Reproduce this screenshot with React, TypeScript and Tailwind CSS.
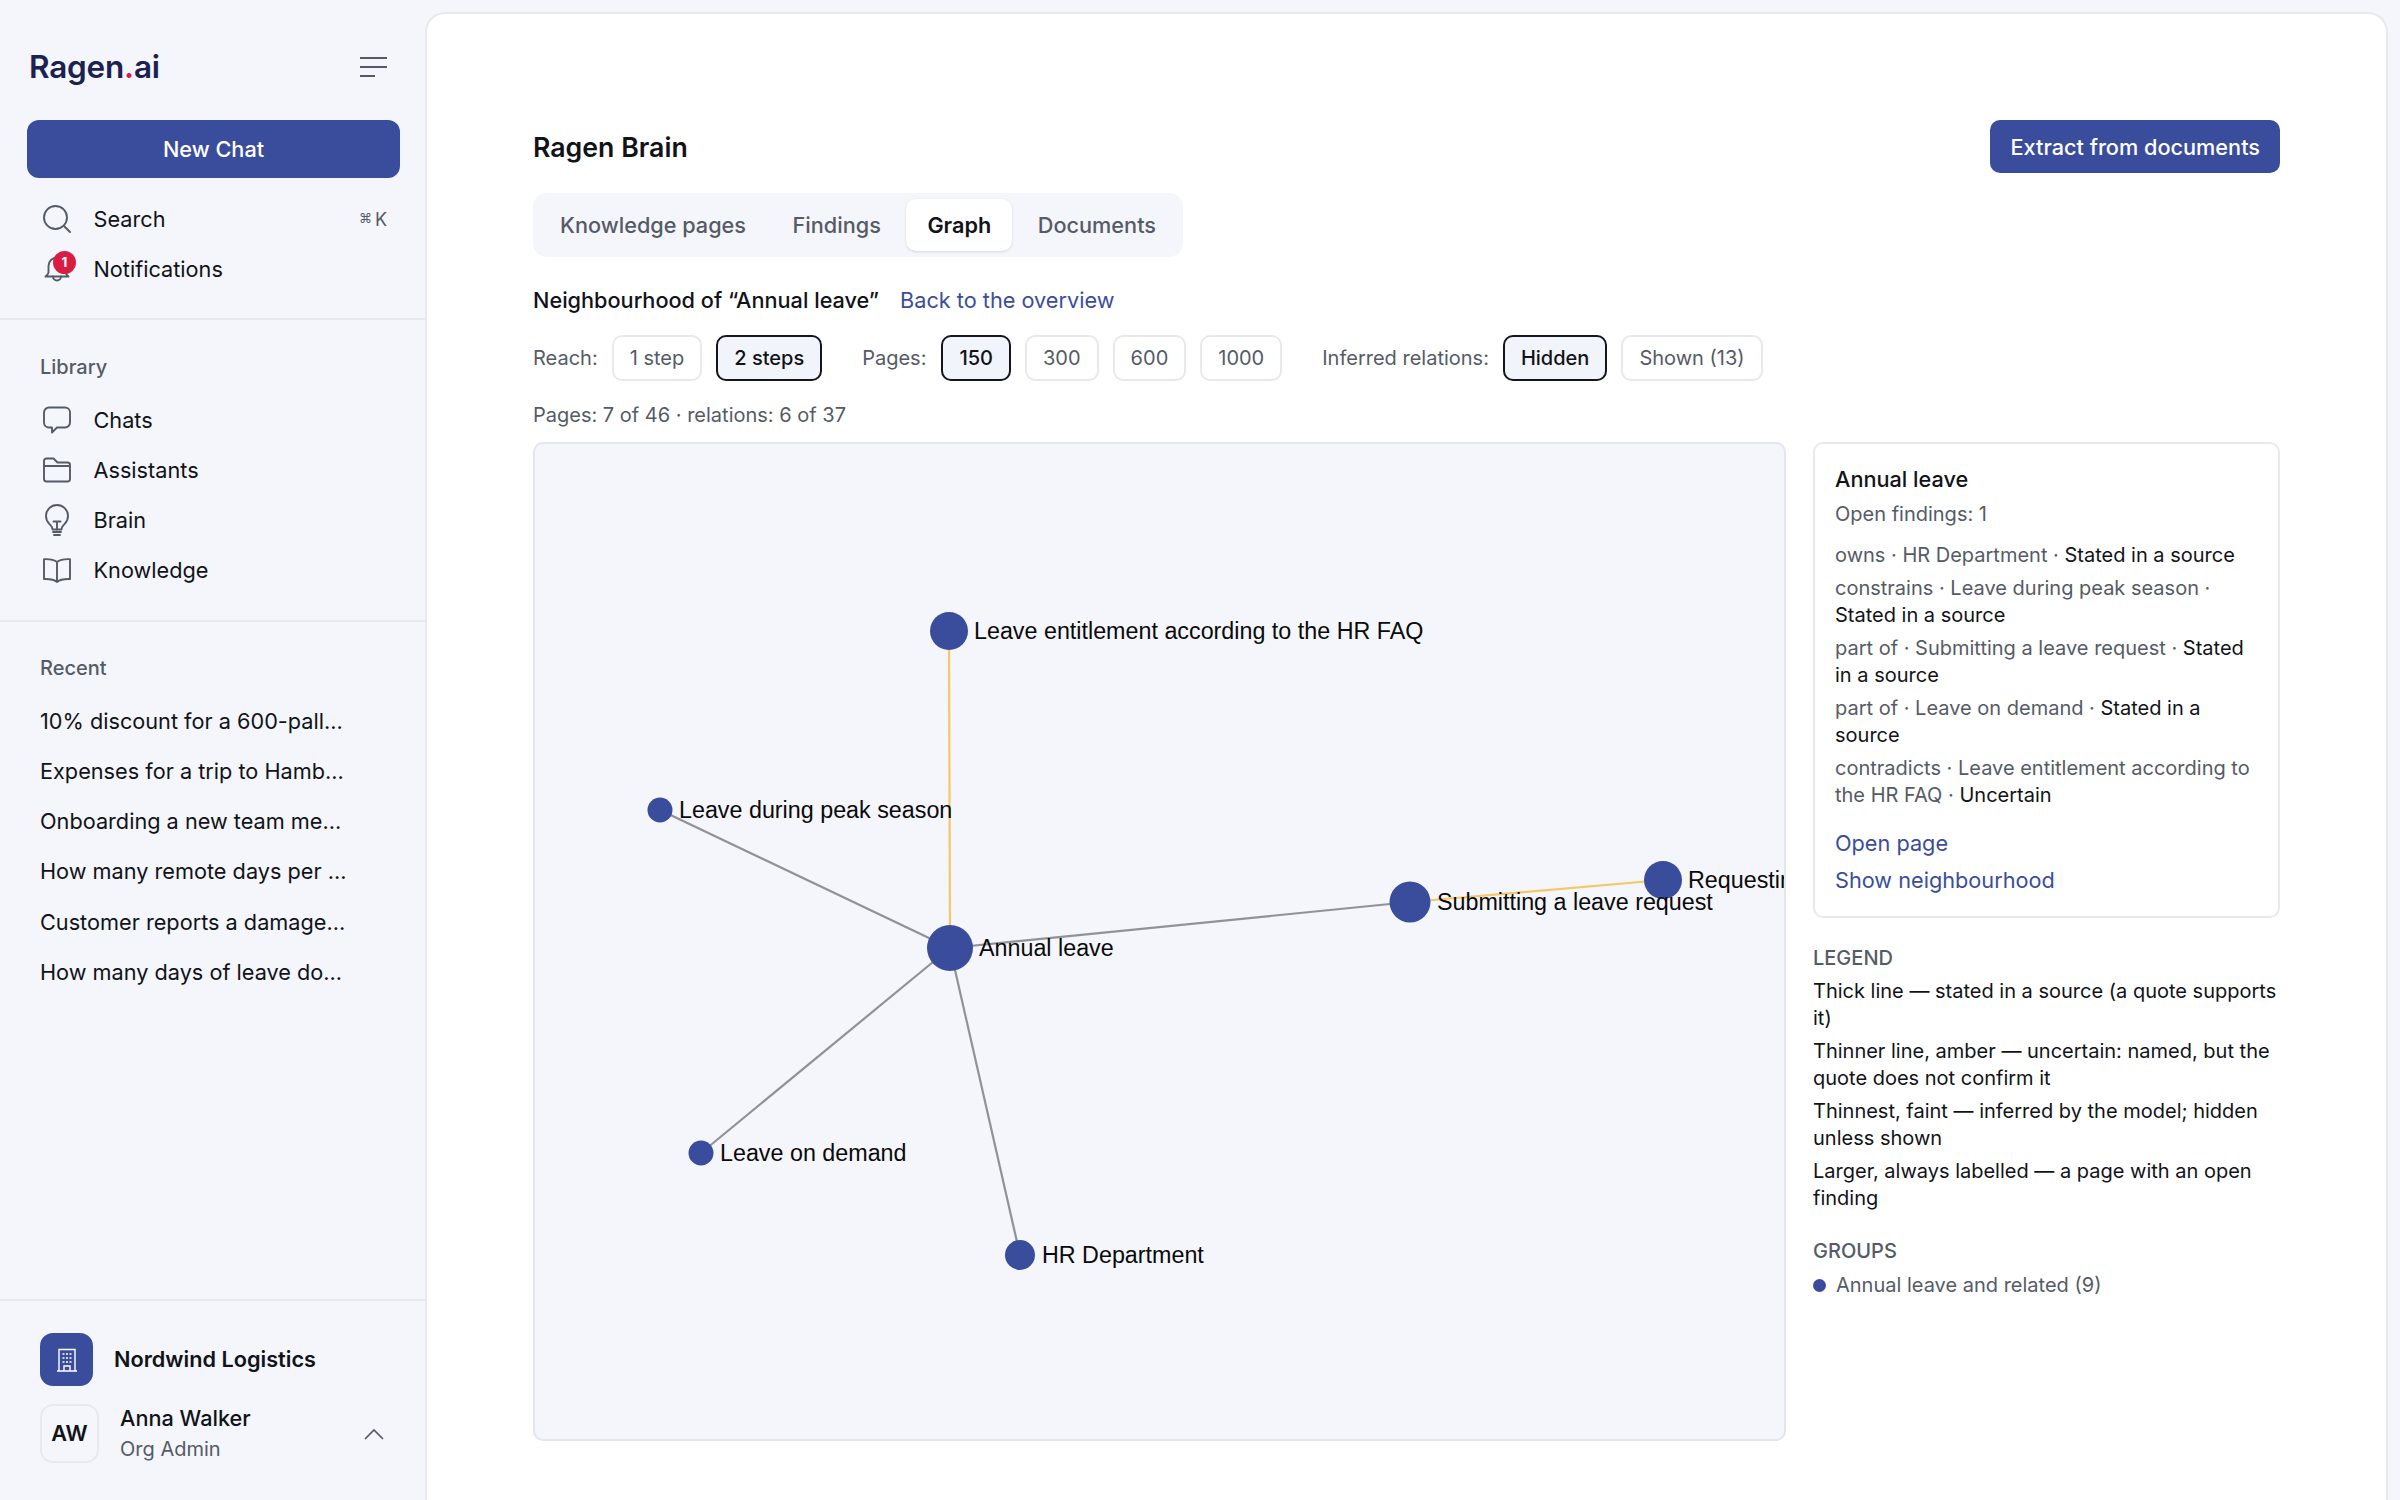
const RECENT = [
  '10% discount for a 600-pall...',
  'Expenses for a trip to Hamb...',
  'Onboarding a new team me...',
  'How many remote days per ...',
  'Customer reports a damage...',
  'How many days of leave do...',
];

const TABS = ['Knowledge pages', 'Findings', 'Graph', 'Documents'];

const RELATIONS = [
  { text: 'owns · HR Department · ', status: 'Stated in a source' },
  { text: 'constrains · Leave during peak season · ', status: 'Stated in a source' },
  { text: 'part of · Submitting a leave request · ', status: 'Stated in a source' },
  { text: 'part of · Leave on demand · ', status: 'Stated in a source' },
  { text: 'contradicts · Leave entitlement according to the HR FAQ · ', status: 'Uncertain' },
];

const LEGEND = [
  'Thick line — stated in a source (a quote supports it)',
  'Thinner line, amber — uncertain: named, but the quote does not confirm it',
  'Thinnest, faint — inferred by the model; hidden unless shown',
  'Larger, always labelled — a page with an open finding',
];

// page coordinates, the svg viewBox below lines up with them
const NODES = [
  { label: 'Leave entitlement according to the HR FAQ', cx: 949, cy: 631, r: 19, lx: 974 },
  { label: 'Leave during peak season', cx: 660, cy: 810, r: 12.5, lx: 679 },
  { label: 'Annual leave', cx: 950, cy: 948, r: 23, lx: 979 },
  { label: 'Submitting a leave request', cx: 1410, cy: 902, r: 20.5, lx: 1437 },
  { label: 'Requesting leave', cx: 1663, cy: 880, r: 19, lx: 1688 },
  { label: 'Leave on demand', cx: 701, cy: 1153, r: 12.5, lx: 720 },
  { label: 'HR Department', cx: 1020, cy: 1255, r: 15, lx: 1042 },
];

const EDGES = [
  { x1: 949, y1: 631, x2: 950, y2: 948, color: '#f6c766' },
  { x1: 1410, y1: 902, x2: 1663, y2: 880, color: '#f6c766' },
  { x1: 660, y1: 810, x2: 950, y2: 948, color: '#8f9298' },
  { x1: 950, y1: 948, x2: 1410, y2: 902, color: '#8f9298' },
  { x1: 950, y1: 948, x2: 701, y2: 1153, color: '#8f9298' },
  { x1: 950, y1: 948, x2: 1020, y2: 1255, color: '#8f9298' },
];

function Icon({ children }: { children: React.ReactNode }) {
  return (
    <svg width="28" height="28" viewBox="0 0 28 28" fill="none" stroke="#555b66" strokeWidth="1.9" strokeLinecap="round" strokeLinejoin="round" className="shrink-0 overflow-visible">
      {children}
    </svg>
  );
}

function NavRow({ icon, label, right }: { icon: React.ReactNode; label: string; right?: React.ReactNode }) {
  return (
    <div className="flex h-[50px] items-center gap-[22.5px] pl-[43px] pr-[38px] text-[21.7px] text-[#111318]">
      {icon}
      <span className="flex-1">{label}</span>
      {right}
    </div>
  );
}

function Pill({ label, active }: { label: string; active?: boolean }) {
  return (
    <div
      className={
        active
          ? 'flex h-[46px] items-center rounded-[10px] border-2 border-[#14161c] bg-[#f2f4fb] px-[16px] font-medium text-[#111318]'
          : 'flex h-[46px] items-center rounded-[10px] border-2 border-[#e7e9ee] bg-white px-[16px] text-[#555b66]'
      }
    >
      {label}
    </div>
  );
}

function Sidebar() {
  return (
    <aside className="flex h-full w-[425px] shrink-0 flex-col">
      <div className="border-b-2 border-[#e7e9ef] pb-[24px] pt-[47px]">
        <div className="flex h-[40px] items-center justify-between pl-[29px] pr-[38px]">
          <span className="text-[31.5px] font-semibold tracking-[-0.2px] text-[#1b2150]">
            Ragen<span className="text-[#d91c44]">.</span>ai
          </span>
          <svg width="27" height="22" viewBox="0 0 27 22" fill="none" stroke="#555b66" strokeWidth="2.2">
            <path d="M0 2h27M0 11h27M0 20h15" />
          </svg>
        </div>
        <div className="ml-[27px] mr-[25px] mt-[33px] flex h-[58px] items-center justify-center rounded-[12px] bg-[#3a4d9c] text-[21.7px] font-medium text-white">
          New Chat
        </div>
        <div className="mt-[16px]">
          <NavRow
            icon={
              <Icon>
                <circle cx="12.5" cy="12.5" r="11.5" />
                <path d="M21 21l6 6" />
              </Icon>
            }
            label="Search"
            right={
              <span className="flex items-center gap-[3px] text-[#555b66]">
                <span className="text-[13px]">⌘</span>
                <span className="text-[18px]">K</span>
              </span>
            }
          />
          <NavRow
            icon={
              <div className="relative h-[28px] w-[28px] shrink-0">
                <Icon>
                  <path d="M5.5 17.5V11a8.5 8.5 0 0 1 17 0v6.5c0 1.5 1.5 2.5 3 4h-23c1.5-1.5 3-2.5 3-4Z" />
                  <path d="M10 21.5a4 4 0 0 0 8 0" />
                </Icon>
                <span className="absolute left-[10px] top-[-4px] flex h-[23px] w-[23px] items-center justify-center rounded-full bg-[#d91c44] text-[13.5px] font-bold text-white">
                  1
                </span>
              </div>
            }
            label="Notifications"
          />
        </div>
      </div>

      <div className="border-b-2 border-[#e7e9ef] pb-[25px] pt-[33px]">
        <div className="pl-[40px] text-[20px] font-medium leading-[28px] text-[#555b66]">Library</div>
        <div className="mt-[14px]">
          <NavRow
            icon={
              <Icon>
                <path d="M6 1.5h16a5 5 0 0 1 5 5v10a5 5 0 0 1-5 5h-8l-5 5v-5H6a5 5 0 0 1-5-5v-10a5 5 0 0 1 5-5Z" />
              </Icon>
            }
            label="Chats"
          />
          <NavRow
            icon={
              <Icon>
                <path d="M1 10V5a2.5 2.5 0 0 1 2.5-2.5h7l4 4h10A2.5 2.5 0 0 1 27 9v14a2.5 2.5 0 0 1-2.5 2.5h-21A2.5 2.5 0 0 1 1 23V10h26" />
              </Icon>
            }
            label="Assistants"
          />
          <NavRow
            icon={
              <Icon>
                <path d="M9.5 23.5c0-3-1.5-3.5-3.5-6a11 11 0 1 1 16 0c-2 2.5-3.5 3-3.5 6Z" />
                <path d="M10.5 15.5h7M14 15.5v8M10 26h8M11 29h6" />
              </Icon>
            }
            label="Brain"
          />
          <NavRow
            icon={
              <Icon>
                <path d="M14 6C11 3.5 7 3 1 3.2V23c6-.2 10 .3 13 3 3-2.7 7-3.2 13-3V3.2C21 3 17 3.5 14 6ZM14 6v20" />
              </Icon>
            }
            label="Knowledge"
          />
        </div>
      </div>

      <div className="flex-1 pt-[32px]">
        <div className="pl-[40px] text-[20px] font-medium leading-[28px] text-[#555b66]">Recent</div>
        <div className="mt-[14px]">
          {RECENT.map(r => (
            <div key={r} className="flex h-[50.2px] items-center pl-[40px] text-[21.7px] text-[#111318]">
              {r}
            </div>
          ))}
        </div>
      </div>

      <div className="border-t-2 border-[#e7e9ef] pb-[37px] pl-[40px] pr-[41px] pt-[32px]">
        <div className="flex items-center gap-[21px]">
          <div className="flex h-[53px] w-[53px] items-center justify-center rounded-[13px] bg-[#3a4d9c]">
            <svg width="22" height="24" viewBox="0 0 22 24" fill="none" stroke="#fff" strokeWidth="1.4">
              <path d="M3 23V1.5h16V23M1 23h20M8 23v-5h6v5" />
              <path d="M6.5 6h2M10 6h2M13.5 6h2M6.5 10h2M10 10h2M13.5 10h2M6.5 14h2M10 14h2M13.5 14h2" />
            </svg>
          </div>
          <span className="text-[21.7px] font-semibold text-[#111318]">Nordwind Logistics</span>
        </div>
        <div className="mt-[18px] flex items-center">
          <div className="flex h-[59px] w-[59px] shrink-0 items-center justify-center rounded-[13px] border-2 border-[#e7e9ef] text-[21.7px] font-semibold text-[#111318]">
            AW
          </div>
          <div className="ml-[21px] flex-1">
            <div className="text-[21.7px] font-medium leading-[28px] text-[#111318]">Anna Walker</div>
            <div className="mt-[3px] text-[20px] leading-[28px] text-[#555b66]">Org Admin</div>
          </div>
          <svg width="20" height="12" viewBox="0 0 20 12" fill="none" stroke="#555b66" strokeWidth="1.7">
            <path d="M1 11 10 2l9 9" />
          </svg>
        </div>
      </div>
    </aside>
  );
}

function Graph() {
  return (
    <div className="h-[999px] w-[1253px] shrink-0 overflow-hidden rounded-[10px] border-2 border-[#e3e6ec] bg-[#f4f6fb]">
      <svg viewBox="535 444 1249 995" className="block h-full w-full">
        {EDGES.map(e => (
          <line key={`${e.x1}-${e.x2}`} x1={e.x1} y1={e.y1} x2={e.x2} y2={e.y2} stroke={e.color} strokeWidth="2.2" />
        ))}
        {NODES.map(n => (
          <circle key={n.label} cx={n.cx} cy={n.cy} r={n.r} fill="#3a4d9c" />
        ))}
        {NODES.map(n => (
          <text key={n.label} x={n.lx} y={n.cy + 8} fontSize="23.3" fontFamily="'Liberation Sans', Arial, sans-serif" fill="#0a0a0a">
            {n.label}
          </text>
        ))}
      </svg>
    </div>
  );
}

function SidePanel() {
  return (
    <div className="w-[467px] shrink-0 text-[20px] leading-[26.7px]">
      <div className="rounded-[10px] border-2 border-[#e7e9ee] px-[20px] pb-[22px] pt-[21px]">
        <div className="text-[21.7px] font-medium leading-[28px] text-[#111318]">Annual leave</div>
        <div className="mt-[8px] text-[#555b66]">Open findings: 1</div>
        <div className="mt-[14px] flex flex-col gap-[6.6px]">
          {RELATIONS.map(r => (
            <div key={r.text} className="text-[#555b66]">
              {r.text}
              <span className="text-[#111318]">{r.status}</span>
            </div>
          ))}
        </div>
        <div className="mt-[22px] flex flex-col gap-[10px] text-[21.7px] leading-[27px] text-[#3a4d9c]">
          <span>Open page</span>
          <span>Show neighbourhood</span>
        </div>
      </div>

      <div className="mt-[27px] font-medium text-[#555b66]">LEGEND</div>
      <div className="mt-[6px] flex flex-col gap-[6.6px] text-[#111318]">
        {LEGEND.map(l => (
          <div key={l}>{l}</div>
        ))}
      </div>

      <div className="mt-[26px] font-medium text-[#555b66]">GROUPS</div>
      <div className="mt-[8px] flex items-center gap-[10px] text-[#555b66]">
        <span className="h-[13px] w-[13px] rounded-full bg-[#3a4d9c]" />
        Annual leave and related (9)
      </div>
    </div>
  );
}

export default function App() {
  return (
    <div className="flex h-screen w-screen overflow-hidden bg-[#f4f6fb] font-['Inter',sans-serif]">
      <Sidebar />
      <div className="mr-[12px] mt-[12px] flex-1 rounded-t-[20px] border-2 border-b-0 border-[#e7e9ef] bg-white pl-[106px] pr-[106px] pt-[106px]">
        <div className="flex h-[53px] items-center justify-between">
          <h1 className="pt-[2px] text-[26.7px] font-semibold text-[#111318]">Ragen Brain</h1>
          <div className="flex h-[53px] items-center rounded-[10px] bg-[#3a4d9c] px-[20px] pt-[1px] text-[21.7px] font-medium text-white">
            Extract from documents
          </div>
        </div>

        <div className="mt-[20px] flex w-fit gap-[4.5px] rounded-[14px] bg-[#f4f6fb] p-[6px] text-[21.7px] font-medium">
          {TABS.map(t => (
            <div
              key={t}
              className={
                t === 'Graph'
                  ? 'flex h-[52px] items-center rounded-[10px] bg-white px-[21px] font-semibold text-[#111318] shadow-sm'
                  : 'flex h-[52px] items-center px-[21px] text-[#555b66]'
              }
            >
              {t}
            </div>
          ))}
        </div>

        <div className="mt-[29px] flex gap-[21px] text-[21.7px] leading-[28px]">
          <span className="font-medium text-[#111318]">Neighbourhood of “Annual leave”</span>
          <span className="text-[#3a4d9c]">Back to the overview</span>
        </div>

        <div className="mt-[21px] flex items-center text-[20px] text-[#555b66]">
          <span>Reach:</span>
          <div className="ml-[14px] flex gap-[14px]">
            <Pill label="1 step" />
            <Pill label="2 steps" active />
          </div>
          <span className="ml-[40px]">Pages:</span>
          <div className="ml-[15px] flex gap-[14px]">
            <Pill label="150" active />
            <Pill label="300" />
            <Pill label="600" />
            <Pill label="1000" />
          </div>
          <span className="ml-[40px]">Inferred relations:</span>
          <div className="ml-[14px] flex gap-[14px]">
            <Pill label="Hidden" active />
            <Pill label="Shown (13)" />
          </div>
        </div>

        <div className="mt-[21px] text-[20px] leading-[26px] text-[#555b66]">Pages: 7 of 46 · relations: 6 of 37</div>

        <div className="mt-[14px] flex gap-[27px]">
          <Graph />
          <SidePanel />
        </div>
      </div>
    </div>
  );
}
